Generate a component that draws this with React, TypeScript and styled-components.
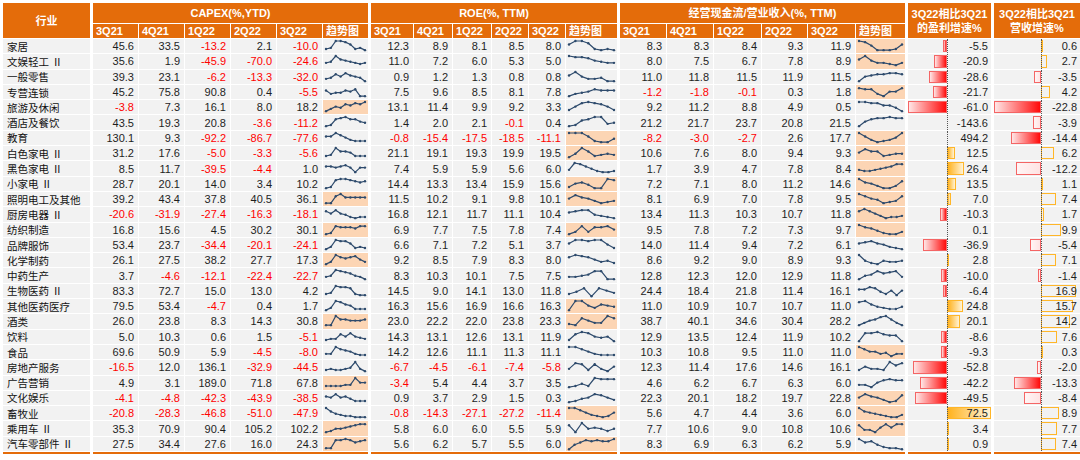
import React from 'react';
import styled, { createGlobalStyle } from 'styled-components';

const ORANGE = '#E46C0A';
const CELL = '#F2F2F2';
const PEACH = '#FCD5B4';
const ROW_H = 14.3;

type Row = [string, number[], number[], number[], number, number];

const rows: Row[] = [
	['家居', [45.6, 33.5, -13.2, 2.1, -10.0], [12.3, 8.9, 8.1, 8.5, 8.0], [8.3, 8.3, 8.4, 9.3, 11.9], -5.5, 0.6],
	['文娱轻工Ⅱ', [35.6, 1.9, -45.9, -70.0, -24.6], [11.0, 7.2, 6.0, 5.3, 5.0], [8.0, 7.5, 6.7, 7.8, 8.9], -20.9, 2.7],
	['一般零售', [39.3, 23.1, -6.2, -13.3, -32.0], [0.9, 1.2, 1.3, 0.8, 0.8], [11.0, 11.8, 11.5, 11.9, 11.5], -28.6, -3.5],
	['专营连锁', [45.2, 75.8, 90.8, 0.4, -5.5], [7.5, 9.6, 8.5, 8.1, 7.8], [-1.2, -1.8, -0.1, 0.3, 1.8], -21.7, 4.2],
	['旅游及休闲', [-3.8, 7.3, 16.1, 8.0, 18.2], [13.1, 11.4, 9.9, 9.2, 3.3], [9.2, 11.2, 8.8, 4.9, 0.5], -61.0, -22.8],
	['酒店及餐饮', [43.5, 19.3, 20.8, -3.6, -11.2], [1.4, 2.0, 2.1, -0.1, 0.4], [21.2, 21.7, 23.7, 20.8, 21.5], -143.6, -3.9],
	['教育', [130.1, 9.3, -92.2, -86.7, -77.6], [-0.8, -15.4, -17.5, -18.5, -11.1], [-8.2, -3.0, -2.7, 2.6, 17.7], 494.2, -14.4],
	['白色家电Ⅱ', [31.2, 17.6, -5.0, -3.3, -5.6], [21.1, 19.1, 19.3, 19.9, 19.5], [10.6, 7.6, 8.0, 9.4, 9.3], 12.5, 6.2],
	['黑色家电Ⅱ', [8.5, 11.7, -39.5, -4.4, 1.0], [7.4, 5.9, 5.9, 5.6, 6.0], [1.7, 3.9, 4.7, 7.8, 8.4], 26.4, -12.2],
	['小家电Ⅱ', [28.7, 20.1, 14.0, 3.4, 10.2], [14.4, 13.3, 13.4, 15.9, 15.6], [7.2, 7.1, 8.0, 11.2, 14.6], 13.5, 1.1],
	['照明电工及其他', [39.2, 43.4, 37.8, 40.5, 36.1], [11.5, 10.2, 9.1, 9.8, 10.1], [8.1, 6.9, 7.0, 7.8, 9.5], 7.0, 7.4],
	['厨房电器Ⅱ', [-20.6, -31.9, -27.4, -16.3, -18.1], [16.8, 12.1, 11.7, 11.1, 10.4], [13.4, 11.3, 10.3, 10.7, 11.8], -10.3, 1.7],
	['纺织制造', [16.8, 15.6, 4.5, 30.2, 30.1], [6.9, 7.7, 7.5, 7.8, 7.4], [9.5, 7.8, 7.2, 7.3, 9.7], 0.1, 9.9],
	['品牌服饰', [53.4, 23.7, -34.4, -20.1, -24.1], [6.6, 7.1, 7.2, 5.1, 3.7], [14.0, 11.4, 9.4, 7.2, 6.1], -36.9, -5.4],
	['化学制药', [26.1, 27.5, 38.2, 27.7, 17.3], [9.2, 8.5, 7.9, 8.3, 8.0], [8.6, 9.2, 9.0, 8.9, 9.3], 2.8, 7.1],
	['中药生产', [3.7, -4.6, -12.1, -22.4, -22.7], [8.3, 10.3, 10.1, 7.5, 7.5], [12.8, 12.3, 12.0, 12.9, 11.8], -10.0, -1.4],
	['生物医药Ⅱ', [83.3, 72.7, 15.0, 13.0, 4.2], [14.5, 9.0, 14.1, 13.0, 11.8], [24.4, 18.4, 21.8, 11.4, 16.1], -6.4, 16.9],
	['其他医药医疗', [79.5, 53.4, -4.7, 0.4, 1.7], [16.3, 15.6, 16.9, 16.6, 16.3], [11.0, 10.9, 10.7, 10.7, 11.0], 24.8, 15.7],
	['酒类', [26.0, 23.8, 8.3, 14.3, 30.8], [23.0, 22.2, 22.0, 23.8, 23.3], [38.7, 40.1, 34.6, 30.4, 28.2], 20.1, 14.2],
	['饮料', [5.0, 10.3, 0.6, 1.5, -5.1], [14.3, 13.1, 12.6, 13.1, 11.9], [12.9, 13.5, 12.4, 11.9, 10.2], -8.6, 7.6],
	['食品', [69.6, 50.9, 5.9, -4.5, -8.0], [14.2, 12.6, 11.1, 11.3, 11.1], [10.3, 10.8, 9.5, 11.0, 11.0], -9.3, 0.3],
	['房地产服务', [-16.5, 12.0, 136.1, -32.9, -44.5], [-6.7, -4.5, -6.1, -7.4, -5.8], [12.3, 11.4, 17.6, 14.6, 16.1], -52.8, -2.0],
	['广告营销', [4.9, 3.1, 189.0, 71.8, 67.8], [-3.4, 5.4, 4.4, 3.7, 3.5], [4.6, 6.2, 6.7, 6.3, 6.0], -42.2, -13.3],
	['文化娱乐', [-4.1, -4.8, -42.3, -43.9, -38.5], [0.9, 3.7, 2.9, 1.5, 0.3], [22.3, 20.1, 18.2, 19.7, 22.8], -49.5, -8.4],
	['畜牧业', [-20.8, -28.3, -46.8, -51.0, -47.9], [-0.8, -14.3, -27.1, -27.2, -11.4], [5.6, 4.7, 4.4, 3.6, 6.0], 72.5, 8.9],
	['乘用车Ⅱ', [35.3, 70.9, 90.4, 105.2, 102.2], [5.8, 6.0, 6.0, 5.5, 5.9], [7.7, 10.6, 9.0, 10.8, 10.6], 3.4, 7.7],
	['汽车零部件Ⅱ', [27.5, 34.4, 27.6, 16.0, 24.3], [5.6, 6.2, 5.7, 5.5, 6.0], [8.3, 6.9, 6.3, 6.2, 5.9], 0.9, 7.4],
];

const trends: string[][] = [
	['239986231', '69972121', '98511126'],
	['349654323', '98875433', '69533213'],
	['347586541', '69533411', '15677887'],
	['634465711', '13457666', '87731558'],
	['135476879', '25898752', '99886641'],
	['127897754', '12679934', '15788988'],
	['669753222', '99962114', '96312359'],
	['239665222', '14962343', '58662344'],
	['665675155', '398642112', '322345688'],
	['128998767', '25641198', '96531137'],
	['117966666', '58653123', '97541237'],
	['758542122', '67884321', '797531223'],
	['128777688', '13837785', '97642113'],
	['139886232', '69989952', '67865321'],
	['139767853', '79875342', '94214334'],
	['349876431', '33458811', '14586783'],
	['239887211', '2470753', '668742515'],
	['139865222', '19953654', '89643224'],
	['119665556', '21753397', '135689631'],
	['233758543', '27985451', '18897661'],
	['339765322', '99753222', '975534133'],
	['232234931', '38727315', '25332968'],
	['222233955', '12429888', '33157877'],
	['658564222', '12458753', '58653127'],
	['964322111', '997532125', '965432113'],
	['124456788', '71945424', '733158588'],
	['118898678', '046878779', '96742110'],
];

// which trend cells are shaded peach: capex, roe, cash flow
const marks = [
	'001', '001', '000', '001', '100', '000', '011', '011', '001', '011', '111', '001', '111', '000',
	'100', '000', '000', '010', '110', '000', '001', '000', '100', '001', '011', '101', '110',
];

const quarters = ['3Q21', '4Q21', '1Q22', '2Q22', '3Q22'];

const groups = [
	{ title: 'CAPEX(%,YTD)', cols: [45, 45, 45, 45, 45, 45] },
	{ title: 'ROE(%, TTM)', cols: [42, 38, 38, 36, 36, 51] },
	{ title: '经营现金流/营业收入(%, TTM)', cols: [46, 46, 47, 45, 47, 49] },
];

const GlobalStyle = createGlobalStyle`
	body {
		margin: 0;
		background: #fff;
		font-family: "Liberation Sans", Arial, "Noto Sans CJK SC", sans-serif;
	}
`;

const Sheet = styled.div`
	display: flex;
	gap: 3px;
	width: 1080px;
	height: 460px;
	box-sizing: border-box;
	padding: 3px 0 0 3px;
	overflow: hidden;
`;

const Block = styled.div<{ $cols: string }>`
	display: grid;
	grid-template-columns: ${(p) => p.$cols};
	grid-template-rows: 20px 14px repeat(27, ${ROW_H}px);
	gap: 1px;
	padding-bottom: 1px;
	align-self: flex-start;
	border-bottom: 2px solid ${ORANGE};
`;

const Head = styled.div<{ $tall?: boolean; $full?: boolean; $left?: boolean }>`
	background: ${ORANGE};
	color: #fff;
	font-weight: 700;
	font-size: 11px;
	line-height: 14px;
	display: flex;
	flex-direction: column;
	align-items: ${(p) => (p.$left ? 'flex-start' : 'center')};
	justify-content: center;
	padding-left: ${(p) => (p.$left ? '3px' : '0')};
	grid-row: ${(p) => (p.$tall ? 'span 2' : 'auto')};
	grid-column: ${(p) => (p.$full ? '1 / -1' : 'auto')};
	white-space: nowrap;
	overflow: hidden;
`;

const Name = styled.div`
	background: ${CELL};
	color: #111;
	font-size: 10.5px;
	padding-left: 4px;
	display: flex;
	align-items: center;
	white-space: nowrap;
	overflow: hidden;
`;

const Num = styled.div<{ $neg?: boolean }>`
	background: ${CELL};
	color: ${(p) => (p.$neg ? '#FF0000' : '#1E1E1E')};
	font-size: 11px;
	display: flex;
	align-items: center;
	justify-content: flex-end;
	padding-right: 4px;
	white-space: nowrap;
`;

const Trend = styled.div<{ $hl: boolean }>`
	background: ${(p) => (p.$hl ? PEACH : CELL)};
	display: flex;
	align-items: center;
`;

const BarCell = styled(Num)`
	position: relative;
	padding-right: 3px;
	span {
		position: relative;
		z-index: 1;
	}
`;

const Axis = styled.i<{ $at: number }>`
	position: absolute;
	top: 0;
	bottom: 0;
	left: ${(p) => p.$at}px;
	border-left: 1px dotted #555;
`;

const Bar = styled.b<{ $tone: 'red' | 'gold' | 'redLine' | 'goldLine' }>`
	position: absolute;
	top: 1px;
	bottom: 1px;
	box-sizing: border-box;
	border: 1px solid ${(p) => (p.$tone === 'red' || p.$tone === 'redLine' ? '#F46565' : '#FFB628')};
	background: ${(p) =>
		({
			red: 'linear-gradient(to right, #FFE6E6, #FF0A0A)',
			gold: 'linear-gradient(to right, #FFB21E, #FFF3D6)',
			redLine: 'linear-gradient(to right, #FFF5F5, #FFE3E3)',
			goldLine: 'transparent',
		})[p.$tone]};
`;

const Spark = ({ shape, w }: { shape: string; w: number }) => {
	const h = ROW_H;
	const vals = shape.split('').map(Number);
	const pts = vals.map((v, i) => [3 + (i * (w - 6)) / (vals.length - 1), h - 2 - (v / 9) * (h - 4)]);
	return (
		<svg width={w} height={h} style={{ display: 'block' }}>
			<polyline
				points={pts.map((p) => p.join(',')).join(' ')}
				fill="none"
				stroke="#2D4A6C"
				strokeWidth={1.2}
				strokeLinejoin="round"
			/>
			{pts.map((p, i) => (
				<circle key={i} cx={p[0]} cy={p[1]} r={1.2} fill="#2D4A6C" />
			))}
		</svg>
	);
};

const DataBar = ({ value, axis, scale, room, outline }: Props) => {
	const neg = value < 0;
	const len = Math.min(Math.abs(value) * scale, neg ? axis : room);
	const show = Math.abs(value) <= 100 && len > 0.3;
	let tone: 'red' | 'gold' | 'redLine' | 'goldLine' = neg ? 'red' : 'gold';
	if (outline && !(neg && value < -13)) tone = neg ? 'redLine' : 'goldLine';
	return (
		<BarCell>
			{show && <Bar $tone={tone} style={{ left: neg ? axis - len : axis, width: len }} />}
			<Axis $at={axis} />
			<span>{value.toFixed(1)}</span>
		</BarCell>
	);
};

interface Props {
	value: number;
	axis: number;
	scale: number;
	room: number;
	outline?: boolean;
}

const App = () => (
	<>
		<GlobalStyle />
		<Sheet>
			<Block $cols="87px">
				<Head $tall>行业</Head>
				{rows.map((r) => (
					<Name key={r[0]}>{r[0].replace('Ⅱ', ' Ⅱ')}</Name>
				))}
			</Block>

			{groups.map((g, gi) => (
				<Block key={g.title} $cols={g.cols.map((c) => `${c}px`).join(' ')}>
					<Head $full>{g.title}</Head>
					{quarters.map((q) => (
						<Head key={q} $left>
							{q}
						</Head>
					))}
					<Head $left>趋势图</Head>
					{rows.map((r, ri) => (
						<React.Fragment key={r[0]}>
							{(r[gi + 1] as number[]).map((v, ci) => (
								<Num key={ci} $neg={v < 0}>
									{v.toFixed(1)}
								</Num>
							))}
							<Trend $hl={marks[ri][gi] === '1'}>
								<Spark shape={trends[ri][gi]} w={g.cols[5]} />
							</Trend>
						</React.Fragment>
					))}
				</Block>
			))}

			<Block $cols="83px">
				<Head $tall>
					<div>3Q22相比3Q21</div>
					<div>的盈利增速%</div>
				</Head>
				{rows.map((r) => (
					<DataBar key={r[0]} value={r[4]} axis={39} scale={0.64} room={44} />
				))}
			</Block>

			<Block $cols="86px">
				<Head $tall>
					<div>3Q22相比3Q21</div>
					<div>营收增速%</div>
				</Head>
				{rows.map((r) => (
					<DataBar key={r[0]} value={r[5]} axis={47} scale={2.05} room={38} outline />
				))}
			</Block>
		</Sheet>
	</>
);

export default App;
